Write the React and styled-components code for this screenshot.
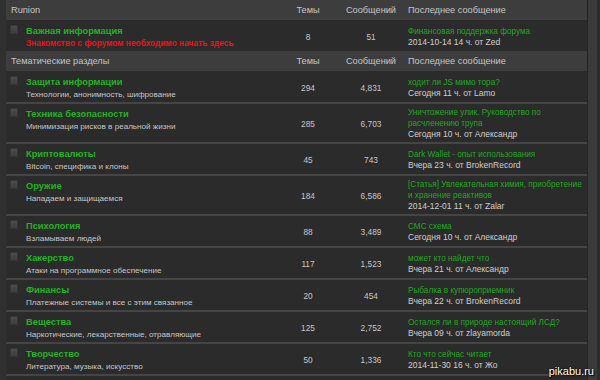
import React from "react";
import styled, { createGlobalStyle } from "styled-components";

const Global = createGlobalStyle`
  html, body { margin: 0; padding: 0; background: #303030; overflow: hidden; }
  body { font-family: "Liberation Sans", Arial, sans-serif; width: 600px; height: 380px; }
`;

const Page = styled.div`
  position: relative;
  display: flex;
  align-items: stretch;
  width: 600px;
  height: 380px;
  overflow: hidden;
`;

const Board = styled.div`
  flex: 1;
  margin-left: 6px;
  background: #2b2b2b;
  overflow: hidden;
`;

const Gutter = styled.div`
  width: 9px;
  flex: none;
  border-left: 1px solid #252525;
  background: #3a3a3a;
`;

const Edge = styled.div`
  width: 3px;
  flex: none;
  background: #2c2c2c;
`;

const Grid = styled.div`
  display: grid;
  grid-template-columns: 1fr 53px 64px 184px;
`;

const Head = styled(Grid)`
  height: 20px;
  background: #3d3d3d;
  align-items: center;
  color: #c6c6c6;
  font-size: 9.2px;
`;

const HeadCell = styled.div`
  padding-left: ${(p) => p.$pl || 0}px;
  padding-right: ${(p) => p.$pr || 0}px;
  text-align: ${(p) => p.$align || "left"};
`;

const Row = styled(Grid)`
  align-items: center;
  padding: ${(p) => (p.$first ? "4px" : "3px")} 0 2px;
  border-top: ${(p) => (p.$first ? "none" : "2px solid #454545")};
`;

const Forum = styled.div`
  display: flex;
  align-items: flex-start;
  padding-left: 4px;
  align-self: start;
`;

const Check = styled.span`
  width: 6px;
  height: 7px;
  margin: 1px 8px 0 0;
  flex: none;
  background: linear-gradient(#4b4b4b, #3d3d3d);
  border: 1px solid #363636;
`;

const Texts = styled.div`
  display: flex;
  flex-direction: column;
  white-space: nowrap;
`;

const Title = styled.div`
  color: #22b322;
  font-weight: bold;
  font-size: 9.3px;
  line-height: 14px;
`;

const Desc = styled.div`
  color: ${(p) => (p.$red ? "#e8141a" : "#c6c6c6")};
  font-weight: ${(p) => (p.$red ? "bold" : "normal")};
  font-size: ${(p) => (p.$red ? "8.4px" : "8.1px")};
  line-height: 11px;
`;

const Num = styled.div`
  color: #c8c8c8;
  font-size: 8.3px;
  text-align: center;
  padding-right: ${(p) => p.$pr || 0}px;
`;

const Last = styled.div`
  padding-left: 5px;
  white-space: nowrap;
`;

const LastTopic = styled.div`
  color: #1fa81f;
  font-size: 8.2px;
  line-height: 11px;
`;

const LastMeta = styled.div`
  color: #d0d0d0;
  font-size: 8.5px;
  line-height: 11px;
`;

const Watermark = styled.div`
  position: absolute;
  right: 6px;
  bottom: 3px;
  color: #ffffff;
  font-size: 11px;
  font-family: "Liberation Sans", Arial, sans-serif;
  text-shadow: 0 0 2px #000, 1px 1px 1px #000;
`;

const sections = [
  {
    name: "Runion",
    rows: [
      {
        title: "Важная информация",
        desc: "Знакомство с форумом необходимо начать здесь",
        red: true,
        topics: "8",
        posts: "51",
        last: ["Финансовая поддержка форума"],
        meta: "2014-10-14 14 ч. от Zed",
      },
    ],
  },
  {
    name: "Тематические разделы",
    rows: [
      { title: "Защита информации", desc: "Технологии, анонимность, шифрование", topics: "294", posts: "4,831", last: ["ходит ли JS мимо тора?"], meta: "Сегодня 11 ч. от Lamo" },
      { title: "Техника безопасности", desc: "Минимизация рисков в реальной жизни", topics: "285", posts: "6,703", last: ["Уничтожение улик. Руководство по", "расчленению трупа"], meta: "Сегодня 10 ч. от Александр" },
      { title: "Криптовалюты", desc: "Bitcoin, специфика и клоны", topics: "45", posts: "743", last: ["Dark Wallet - опыт использования"], meta: "Вчера 23 ч. от BrokenRecord" },
      { title: "Оружие", desc: "Нападаем и защищаемся", topics: "184", posts: "6,586", last: ["[Статья] Увлекательная химия, приобретение", "и хранение реактивов"], meta: "2014-12-01 11 ч. от Zalar" },
      { title: "Психология", desc: "Взламываем людей", topics: "88", posts: "3,489", last: ["СМС схема"], meta: "Сегодня 10 ч. от Александр" },
      { title: "Хакерство", desc: "Атаки на программное обеспечение", topics: "117", posts: "1,523", last: ["может кто найдет что"], meta: "Вчера 21 ч. от Александр" },
      { title: "Финансы", desc: "Платежные системы и все с этим связанное", topics: "20", posts: "454", last: ["Рыбалка в купюроприемник"], meta: "Вчера 22 ч. от BrokenRecord" },
      { title: "Вещества", desc: "Наркотические, лекарственные, отравляющие", topics: "125", posts: "2,752", last: ["Остался ли в природе настоящий ЛСД?"], meta: "Вчера 09 ч. от zlayamorda" },
      { title: "Творчество", desc: "Литература, музыка, искусство", topics: "50", posts: "1,336", last: ["Кто что сейчас читает"], meta: "2014-11-30 16 ч. от Жо" },
      { title: "\u00a0", desc: "\u00a0", topics: "", posts: "", last: ["\u00a0"], meta: "\u00a0" },
    ],
  },
];

export default function App() {
  return (
    <Page>
      <Global />
      <Board>
        {sections.map((s) => (
          <React.Fragment key={s.name}>
            <Head>
              <HeadCell $pl={5}>{s.name}</HeadCell>
              <HeadCell $align="center" $pr={9}>Темы</HeadCell>
              <HeadCell $align="center">Сообщений</HeadCell>
              <HeadCell $pl={5}>Последнее сообщение</HeadCell>
            </Head>
            {s.rows.map((r, i) => (
              <Row key={i} $first={i === 0}>
                <Forum>
                  <Check />
                  <Texts>
                    <Title>{r.title}</Title>
                    <Desc $red={r.red}>{r.desc}</Desc>
                  </Texts>
                </Forum>
                <Num $pr={9}>{r.topics}</Num>
                <Num>{r.posts}</Num>
                <Last>
                  {r.last.map((l, j) => (
                    <LastTopic key={j}>{l}</LastTopic>
                  ))}
                  <LastMeta>{r.meta}</LastMeta>
                </Last>
              </Row>
            ))}
          </React.Fragment>
        ))}
      </Board>
      <Gutter />
      <Edge />
      <Watermark>pikabu.ru</Watermark>
    </Page>
  );
}
